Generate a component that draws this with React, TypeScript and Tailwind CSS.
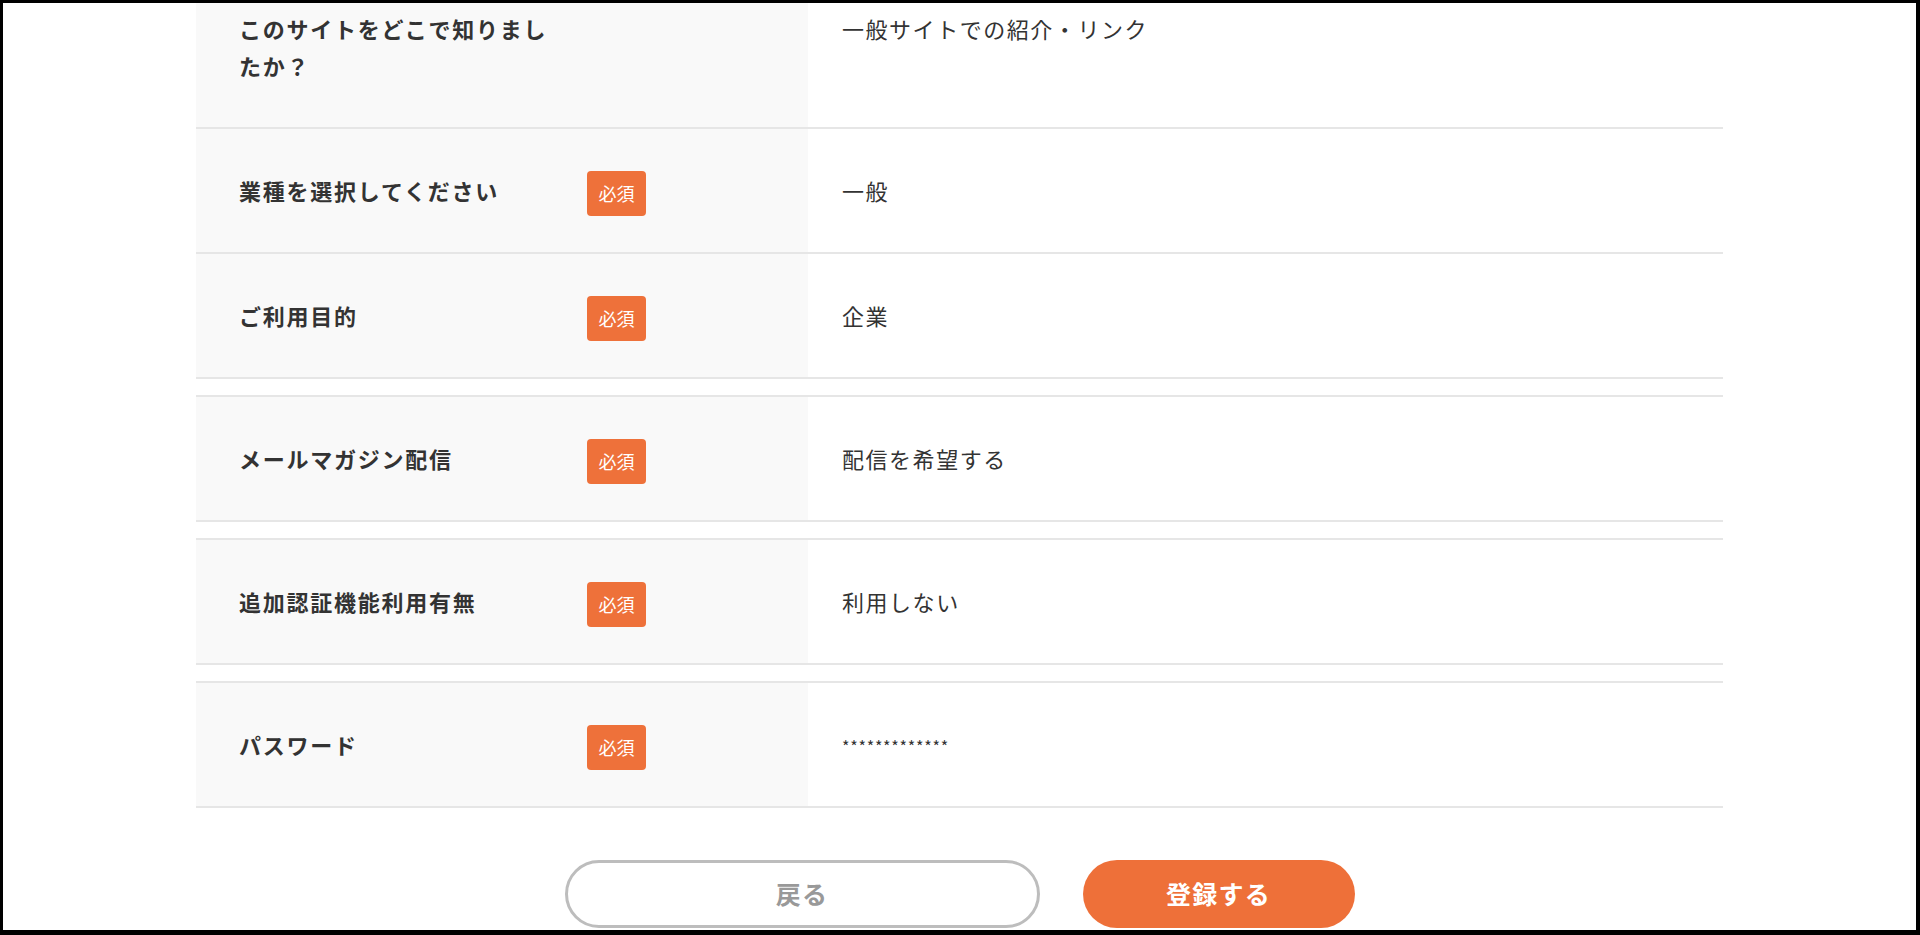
import React from 'react';

type Row = {
    label: string;
    value: string;
    required: boolean;
    mono?: boolean;
};

const firstGroup: Row[] = [
    { label: 'このサイトをどこで知りましたか？', value: '一般サイトでの紹介・リンク', required: false },
    { label: '業種を選択してください', value: '一般', required: true },
    { label: 'ご利用目的', value: '企業', required: true },
];

const singleGroups: Row[] = [
    { label: 'メールマガジン配信', value: '配信を希望する', required: true },
    { label: '追加認証機能利用有無', value: '利用しない', required: true },
    { label: 'パスワード', value: '*************', required: true, mono: true },
];

function FormRow({ row }: { row: Row }) {
    return (
        <div className="flex border-b-2 border-[#e6e6e6]">
            <div className="w-[612px] shrink-0 bg-[#f9f9f9] flex items-center pl-[43px] py-[43px]">
                <div className="w-[316px] font-bold text-[22px] leading-[37px] tracking-[0.08em] text-[#333333]">
                    {row.label}
                </div>
                {row.required && (
                    <span className="ml-[32px] -mt-[1px] -mb-[7px] w-[59px] h-[45px] rounded-[4px] bg-[#ee713a] text-white text-[18px] flex items-center justify-center">
                        必須
                    </span>
                )}
            </div>
            <div
                className={
                    row.mono
                        ? 'flex-1 pl-[34px] pt-[48px] pb-[38px] text-[16px] leading-[30px] tracking-[0.75px] text-[#333333]'
                        : 'flex-1 pl-[34px] py-[43px] text-[22px] leading-[37px] tracking-[0.07em] text-[#333333]'
                }
            >
                {row.value}
            </div>
        </div>
    );
}

export default function App() {
    return (
        <div
            className="h-[935px] overflow-hidden bg-white border-black border-t-[3px] border-l-[3px] border-r-4 border-b-[5px]"
            style={{ fontFamily: '"Noto Sans CJK JP", "Noto Sans", sans-serif' }}
        >
            <div className="w-[1527px] mx-auto -mt-[36px]">
                {/* confirm table */}
                <div>
                    {firstGroup.map((row) => (
                        <FormRow key={row.label} row={row} />
                    ))}
                </div>

                {singleGroups.map((row) => (
                    <div key={row.label} className="mt-[16px] border-t-2 border-[#e6e6e6]">
                        <FormRow row={row} />
                    </div>
                ))}

                {/* actions */}
                <div className="mt-[52px] flex justify-center gap-[43px]">
                    <button className="w-[475px] h-[68px] rounded-full border-[3px] border-[#bdbdbd] bg-white text-[#999999] font-bold text-[25px] tracking-[0.05em] flex items-center justify-center">
                        戻る
                    </button>
                    <button className="w-[272px] h-[68px] rounded-full bg-[#ee7039] text-white font-bold text-[25px] tracking-[0.05em] flex items-center justify-center">
                        登録する
                    </button>
                </div>
            </div>
        </div>
    );
}
